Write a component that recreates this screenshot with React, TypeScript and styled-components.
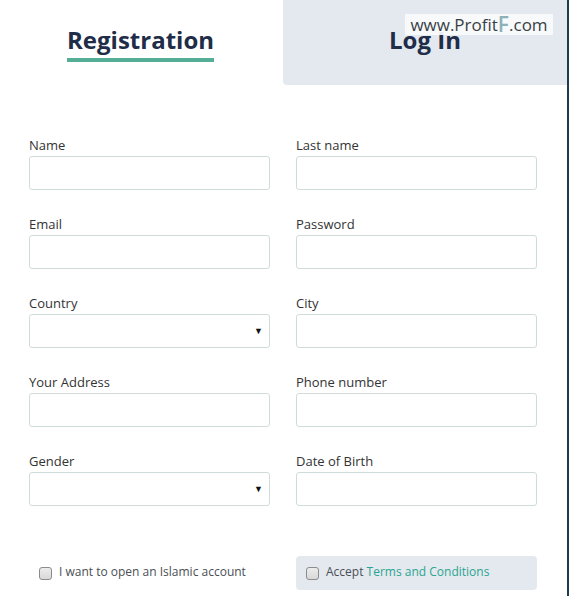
import React from "react";
import styled, { createGlobalStyle } from "styled-components";

const Global = createGlobalStyle`
  html, body { margin: 0; padding: 0; background: #ffffff; }
  body { font-family: "Open Sans", "Liberation Sans", sans-serif; }
  * { box-sizing: border-box; }
`;

const Page = styled.div`
  position: relative;
  width: 569px;
  height: 596px;
  border-right: 2px solid #1f3b4f;
  background: #ffffff;
  overflow: hidden;
`;

const Tabs = styled.div`
  display: flex;
  height: 85px;
`;

const Tab = styled.div<{ $active?: boolean }>`
  flex: 0 0 ${(p) => (p.$active ? "283px" : "284px")};
  display: flex;
  justify-content: center;
  align-items: flex-start;
  padding-top: 23px;
  padding-right: ${(p) => (p.$active ? "2px" : "0")};
  background: ${(p) => (p.$active ? "#ffffff" : "#e4e8ef")};
  border-bottom-left-radius: ${(p) => (p.$active ? "0" : "4px")};
`;

const TabLabel = styled.span<{ $active?: boolean }>`
  font-family: "Open Sans", sans-serif;
  font-weight: 700;
  font-size: 24px;
  line-height: 33px;
  color: #1f2d48;
  padding-bottom: 2px;
  border-bottom: 4px solid ${(p) => (p.$active ? "#55ae96" : "transparent")};
`;

const Watermark = styled.div`
  position: absolute;
  left: 405px;
  top: 14px;
  width: 148px;
  height: 21px;
  background: rgba(248, 250, 252, 0.92);
  display: flex;
  align-items: center;
  justify-content: center;
  font-family: "Open Sans", sans-serif;
  font-size: 17px;
  color: #3a3f45;
  line-height: 21px;
`;

const WaterF = styled.span`
  color: #8eb1b8;
  font-size: 21px;
  font-weight: 600;
`;

const Form = styled.div`
  display: grid;
  grid-template-columns: 241px 241px;
  column-gap: 26px;
  row-gap: 24px;
  padding: 50px 0 0 29px;
`;

const Field = styled.div`
  display: flex;
  flex-direction: column;
`;

const Label = styled.label`
  font-size: 13px;
  line-height: 18px;
  color: #333333;
  padding-top: 1px;
  margin-bottom: 2px;
`;

const Input = styled.div`
  position: relative;
  height: 34px;
  border: 1px solid #cfdcdb;
  border-radius: 3px;
  background: #ffffff;
`;

const Arrow = styled.span`
  position: absolute;
  right: 6px;
  top: 9px;
  font-size: 9px;
  color: #111111;
  line-height: 14px;
`;

const Checks = styled.div`
  display: grid;
  grid-template-columns: 241px 241px;
  column-gap: 26px;
  padding: 50px 0 0 29px;
`;

const CheckRow = styled.div<{ $boxed?: boolean }>`
  height: 34px;
  display: flex;
  align-items: center;
  gap: 7px;
  padding-left: 10px;
  border-radius: 4px;
  background: ${(p) => (p.$boxed ? "#e4e8ef" : "transparent")};
  font-size: 12px;
  color: #4a4f55;
`;

const CheckText = styled.span`
  margin-top: -3px;
`;

const Box = styled.span`
  width: 13px;
  height: 13px;
  border: 1px solid #8c8c8c;
  border-radius: 3px;
  background: linear-gradient(#ececec, #d8d8d8);
  flex: 0 0 auto;
`;

const Link = styled.span`
  color: #2aa590;
`;

const fields: { label: string; select?: boolean }[] = [
  { label: "Name" },
  { label: "Last name" },
  { label: "Email" },
  { label: "Password" },
  { label: "Country", select: true },
  { label: "City" },
  { label: "Your Address" },
  { label: "Phone number" },
  { label: "Gender", select: true },
  { label: "Date of Birth" },
];

export default function App() {
  return (
    <>
      <Global />
      <Page>
        <Tabs>
          <Tab $active>
            <TabLabel $active>Registration</TabLabel>
          </Tab>
          <Tab>
            <TabLabel>Log In</TabLabel>
          </Tab>
        </Tabs>
        <Watermark>
          www.Profit<WaterF>F</WaterF>.com
        </Watermark>
        <Form>
          {fields.map((f) => (
            <Field key={f.label}>
              <Label>{f.label}</Label>
              <Input>{f.select && <Arrow>▼</Arrow>}</Input>
            </Field>
          ))}
        </Form>
        <Checks>
          <CheckRow>
            <Box />
            <CheckText>I want to open an Islamic account</CheckText>
          </CheckRow>
          <CheckRow $boxed>
            <Box />
            <CheckText>
              Accept <Link>Terms and Conditions</Link>
            </CheckText>
          </CheckRow>
        </Checks>
      </Page>
    </>
  );
}
